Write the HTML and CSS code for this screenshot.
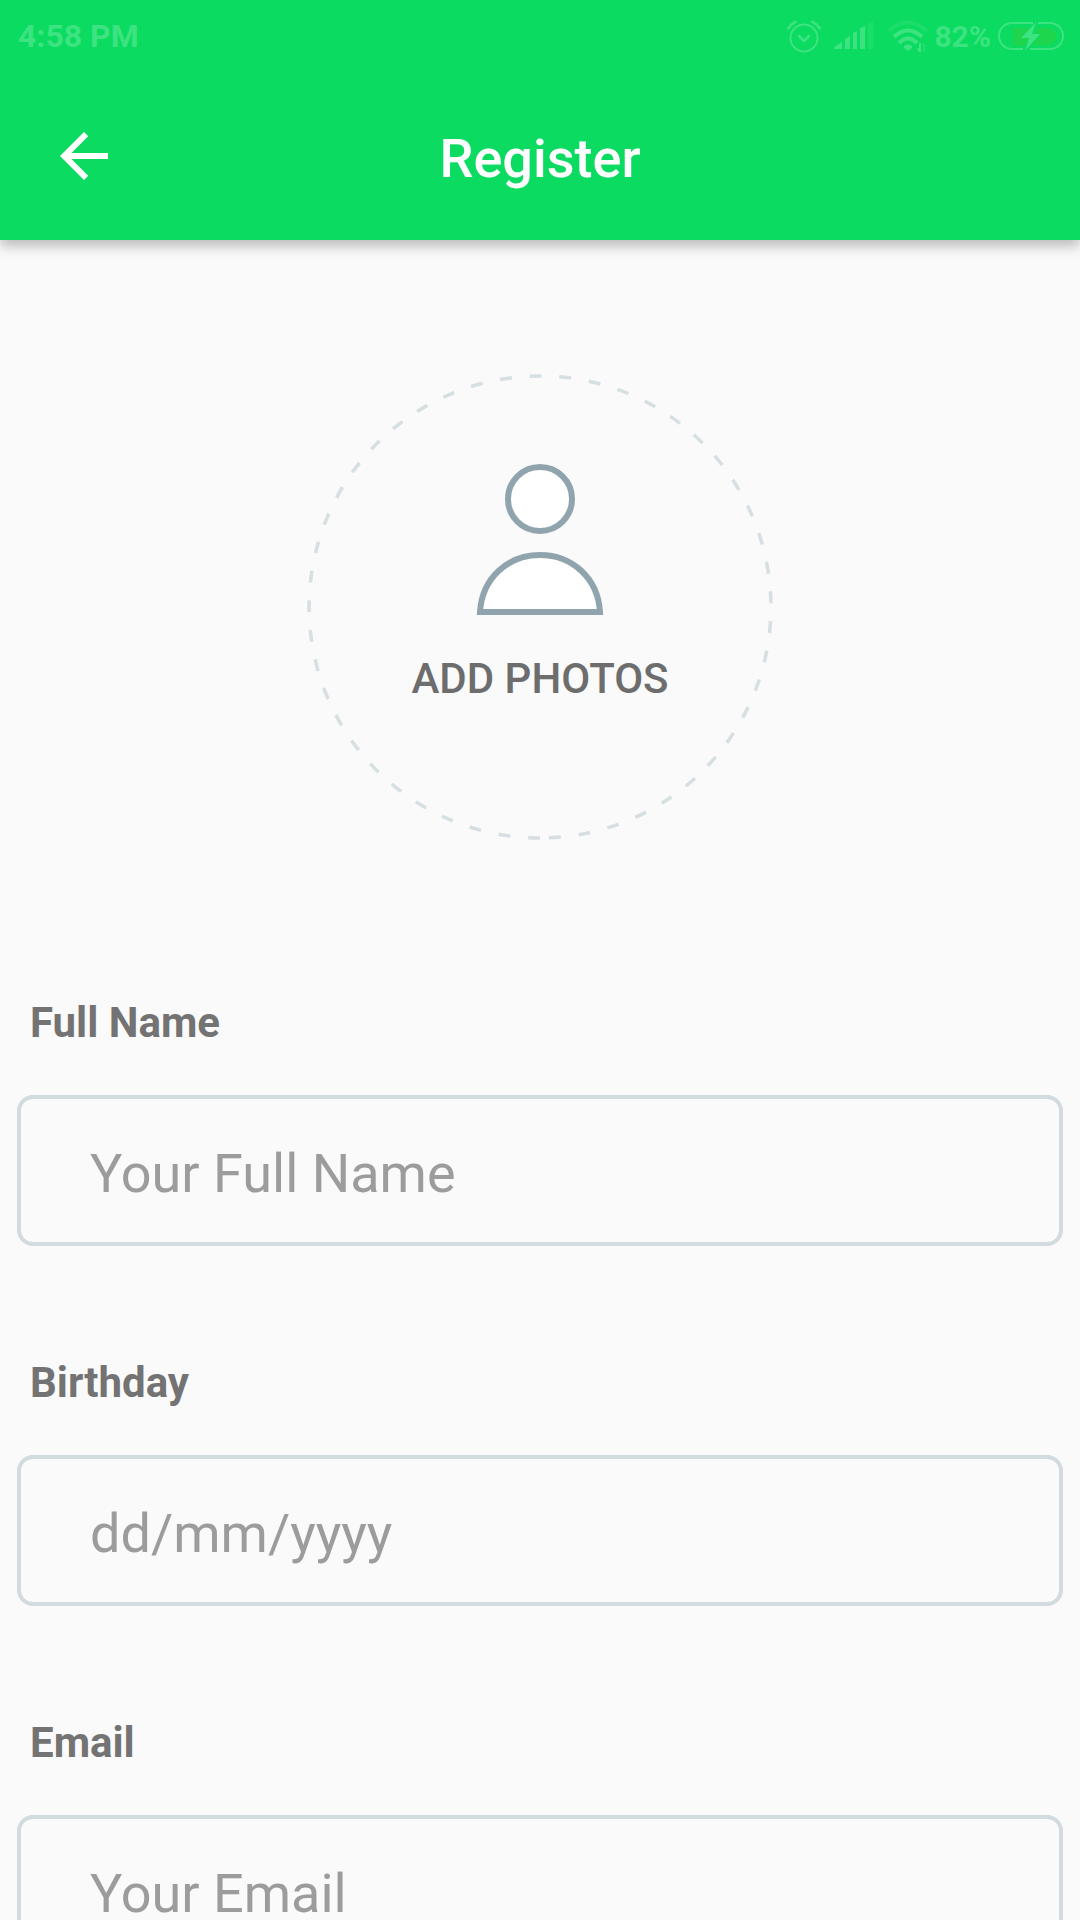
FILE: index.html
```html
<!DOCTYPE html>
<html lang="en">
<head>
<meta charset="utf-8">
<meta name="viewport" content="width=device-width, initial-scale=1">
<title>Register</title>
<link rel="stylesheet" href="styles.css">
</head>
<body>
<div class="app">
  <header class="header">
    <div class="status">
      <span>4:58 PM</span>
      <div class="status-icons">
        <svg width="36" height="36" viewBox="0 0 36 36" fill="none" stroke="currentColor" stroke-width="2" stroke-linecap="round" aria-hidden="true">
          <circle cx="18" cy="20" r="13.5"/>
          <path d="M13 18l5 5 5-5" stroke-width="2.5"/>
          <path d="M2.500 10Q5 6 9.500 4M33.500 10Q31 6 26.500 4" stroke-width="3"/>
        </svg>
        <svg width="40" height="36" viewBox="0 0 40 36" fill="currentColor" aria-hidden="true">
          <path d="M0 31q0-3 8-7v7zM11 21l5-3v13h-5zM19 15l4-2v18h-4zM26 10l5-2v23h-5z"/>
          <path d="M34 6l5-3v28h-5z" opacity=".3"/>
        </svg>
        <svg width="44" height="36" viewBox="0 0 44 36" fill="none" stroke="currentColor" stroke-width="4" aria-hidden="true">
          <path d="M3 13Q21-4 41 13" opacity=".35"/>
          <path d="M8 19Q22 6 36 19M13 25Q22 16 31 25"/>
          <path d="M18 28q4-3 8 0v2l-4 3-4-3z" fill="currentColor" stroke="none"/>
          <path d="M32.500 34h2.500V25h-2v5h-2z" fill="currentColor" stroke="none"/>
          <path d="M37 25v9h2v-6h3z" fill="currentColor" stroke="none" opacity=".4"/>
        </svg>
      </div>
      <span class="percent">82%</span>
      <svg width="68" height="36" viewBox="0 0 68 36" aria-hidden="true">
        <path class="charge" d="M18 10h16l-8 10h6l-4 8H18a2 2 0 0 1-2-2V12a2 2 0 0 1 2-2zM41 10h10q7 0 8 8-1 9-8 9H35l9-11h-5z"/>
        <path d="M36 5H15a13 13 0 0 0 0 26h11M41 5h12a13 13 0 0 1 0 26H33" fill="none" stroke="currentColor" stroke-width="2"/>
        <path d="M39 4L24 20h8l-4 13 15-17h-8z" fill="currentColor"/>
      </svg>
    </div>
    <div class="bar">
      <button class="back" type="button" aria-label="Back">
        <svg width="72" height="72" viewBox="0 0 24 24" fill="currentColor" aria-hidden="true"><path d="M20 11H7.830l5.590-5.590L12 4l-8 8 8 8 1.410-1.410L7.830 13H20v-2z"/></svg>
      </button>
      <h1 class="title">Register</h1>
    </div>
  </header>
  <main class="content">
    <button class="photo" type="button">
      <svg class="ring" width="466" height="466" viewBox="0 0 466 466" fill="none" stroke="currentColor" stroke-width="3.500" aria-hidden="true">
        <path pathLength="1461" stroke-dasharray="12 18" d="M233 464A231 231 0 0 1 233 2A231 231 0 0 1 233 464"/>
      </svg>
      <span class="photo-body">
        <svg class="person" width="128" height="152" viewBox="0 0 128 152" stroke="currentColor" stroke-width="6" aria-hidden="true">
          <circle cx="64" cy="35" r="32"/>
          <path d="M4 148C6 114 32 91 64 91S122 114 124 148z"/>
        </svg>
        <span>ADD PHOTOS</span>
      </span>
    </button>
    <form class="form">
      <div class="field">
        <label class="label" for="name">Full Name</label>
        <input class="input" id="name" type="text" placeholder="Your Full Name">
      </div>
      <div class="field">
        <label class="label" for="birthday">Birthday</label>
        <input class="input" id="birthday" type="text" placeholder="dd/mm/yyyy">
      </div>
      <div class="field">
        <label class="label" for="email">Email</label>
        <input class="input" id="email" type="email" placeholder="Your Email">
      </div>
    </form>
  </main>
</div>
</body>
</html>
```

FILE: styles.css
```css
* {
  box-sizing: border-box;
}

body {
  margin: 0;
  background: #fafafa;
  color: #737373;
  font-family: Roboto, "Liberation Sans", sans-serif;
}

button {
  border: 0;
  padding: 0;
  background: none;
  color: inherit;
  font: inherit;
  cursor: pointer;
}

svg {
  display: block;
  flex: none;
}

.app {
  display: flex;
  flex-direction: column;
  height: 100vh;
}

.header {
  z-index: 1;
  background: #0bdb60;
  color: #fff;
  box-shadow: 0 6px 12px rgba(0, 0, 0, 0.26);
}

.status {
  display: flex;
  align-items: center;
  height: 72px;
  padding: 0 15px 0 18px;
  color: #3de381;
  font-size: 32px;
  font-weight: 700;
}

.status-icons {
  display: flex;
  gap: 12px;
  margin-left: auto;
}

.percent {
  margin: 0 6px 0 4px;
  font-size: 30px;
}

.charge {
  fill: #1fd54e;
}

.bar {
  display: grid;
  grid-template-columns: 72px 1fr 72px;
  align-items: center;
  height: 168px;
  padding: 0 48px;
}

.title {
  margin: 0;
  padding-top: 6px;
  font-size: 54px;
  font-weight: 500;
  line-height: 64px;
  text-align: center;
}

.content {
  flex: 1;
  min-height: 0;
  padding: 134px 17px 0;
  overflow-y: auto;
  scrollbar-width: none;
}

.photo {
  display: grid;
  justify-items: center;
  margin: 0 auto;
}

.ring,
.photo-body {
  grid-area: 1 / 1;
}

.ring {
  color: #d6dfe2;
}

.photo-body {
  display: flex;
  flex-direction: column;
  align-items: center;
  gap: 38px;
  padding-top: 90px;
  color: #6d6d6d;
  font-size: 42px;
  font-weight: 500;
  line-height: 50px;
}

.person {
  color: #90a4ae;
  fill: #fff;
}

.form {
  display: flex;
  flex-direction: column;
  gap: 112px;
  padding: 158px 0 112px;
}

.field {
  display: flex;
  flex-direction: column;
  gap: 47px;
}

.label {
  padding-left: 13px;
  font-size: 42px;
  font-weight: 700;
  line-height: 50px;
}

.input {
  width: 100%;
  height: 151px;
  padding: 5px 69px 0;
  border: 4px solid #d2dbdf;
  border-radius: 16px;
  outline: 0;
  background: transparent;
  color: #333;
  font: 400 54px Roboto, "Liberation Sans", sans-serif;
}

.input::placeholder {
  color: #9c9c9c;
  opacity: 1;
}
```
